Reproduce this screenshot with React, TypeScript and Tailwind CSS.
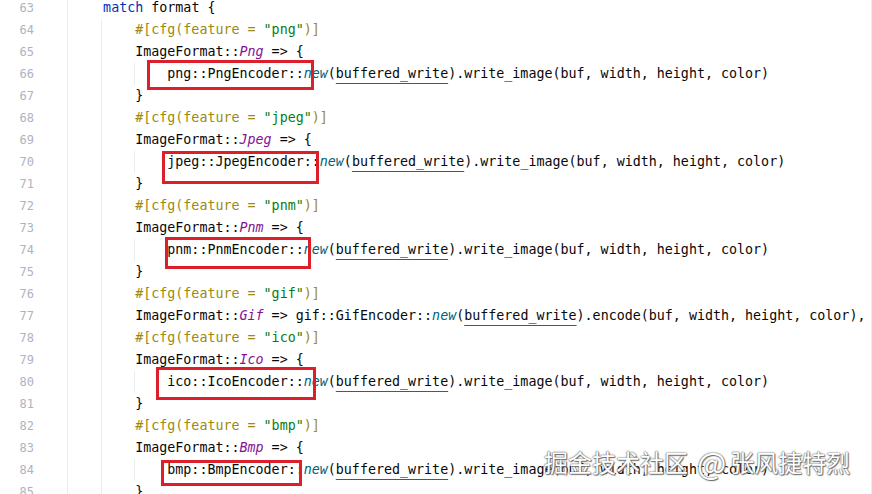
import React from "react";

/* ================= TYPES ================= */
type Tok = { t: string; c?: string };

/* ================= COLORS ================= */
const KW = "text-[#0033b3]";
const ATTR = "text-[#9e880d]";
const STR = "text-[#067d17]";
const VARIANT = "text-[#871094] italic";
const CALL = "text-[#00627a] italic";
const MUT = "underline decoration-[#555] underline-offset-[5px] decoration-1";

const attr = (name: string): Tok[] => [
  { t: "        " },
  { t: "#[cfg(feature = ", c: ATTR },
  { t: `"${name}"`, c: STR },
  { t: ")]", c: ATTR },
];

const arm = (variant: string): Tok[] => [
  { t: "        ImageFormat::" },
  { t: variant, c: VARIANT },
  { t: " => {" },
];

const encode = (mod: string, enc: string): Tok[] => [
  { t: `            ${mod}::${enc}::` },
  { t: "new", c: CALL },
  { t: "(" },
  { t: "buffered_write", c: MUT },
  { t: ").write_image(buf, width, height, color)" },
];

const close: Tok[] = [{ t: "        }" }];

/* ================= DATA ================= */
const lines: Tok[][] = [
  [{ t: "    " }, { t: "match", c: KW }, { t: " format {" }],
  attr("png"),
  arm("Png"),
  encode("png", "PngEncoder"),
  close,
  attr("jpeg"),
  arm("Jpeg"),
  encode("jpeg", "JpegEncoder"),
  close,
  attr("pnm"),
  arm("Pnm"),
  encode("pnm", "PnmEncoder"),
  close,
  attr("gif"),
  [
    { t: "        ImageFormat::" },
    { t: "Gif", c: VARIANT },
    { t: " => gif::GifEncoder::" },
    { t: "new", c: CALL },
    { t: "(" },
    { t: "buffered_write", c: MUT },
    { t: ").encode(buf, width, height, color)," },
  ],
  attr("ico"),
  arm("Ico"),
  encode("ico", "IcoEncoder"),
  close,
  attr("bmp"),
  arm("Bmp"),
  encode("bmp", "BmpEncoder"),
  close,
];

// rows (index) that sit inside an inner block and get the second indent guide
const innerRows = [3, 7, 11, 17, 21];

// red highlight boxes laid over the code
const boxes = [
  "left-[147px] top-[60px] w-[167px] h-[30px]",
  "left-[162px] top-[151px] w-[157px] h-[33px]",
  "left-[165px] top-[237px] w-[146px] h-[32px]",
  "left-[156px] top-[367px] w-[160px] h-[33px]",
  "left-[161px] top-[460px] w-[141px] h-[26px]",
];

/* ================= COMPONENT ================= */
export default function App() {
  return (
    <div className="relative w-[872px] h-[494px] overflow-hidden bg-white border-r border-[#ebecf0] font-['DejaVu_Sans_Mono',monospace]">
      <div className="flex -mt-[3px]">
        {/* GUTTER */}
        <div className="w-[68px] shrink-0 border-r border-[#ebecf0] h-[520px]">
          {lines.map((_, i) => (
            <div
              key={i}
              className="w-[34px] h-[22px] leading-[22px] text-right text-[12px] text-[#aeb3c2]"
            >
              {63 + i}
            </div>
          ))}
        </div>

        {/* CODE */}
        <div className="flex-1 pl-[3px]">
          {lines.map((toks, i) => (
            <div
              key={i}
              className="relative h-[22px] leading-[22px] text-[13.33px] text-[#080808] whitespace-pre"
            >
              {/* Indent guides */}
              {i > 0 && (
                <span className="absolute left-[30px] top-0 h-full w-px bg-[#ebecf0]" />
              )}
              {innerRows.includes(i) && (
                <span className="absolute left-[63px] top-0 h-full w-px bg-[#ebecf0]" />
              )}
              {toks.map((tok, j) => (
                <span key={j} className={tok.c}>
                  {tok.t}
                </span>
              ))}
            </div>
          ))}
        </div>
      </div>

      {/* RED BOXES */}
      {boxes.map((b, i) => (
        <div key={i} className={`absolute ${b} border-[3px] border-[#dc1f2a]`} />
      ))}

      {/* WATERMARK */}
      <div className="absolute left-[544px] top-[446px] flex items-center text-[24px] leading-[32px] text-white whitespace-pre font-['Noto_Sans_CJK_SC',sans-serif] [text-shadow:0_0_1px_#555,0_0_2px_#666,1px_1px_1px_#777]">
        <span>掘金技术社区</span>
        <span className="ml-[9px] mr-[4px] text-[31px]">@</span>
        <span>张风捷特烈</span>
      </div>
    </div>
  );
}
